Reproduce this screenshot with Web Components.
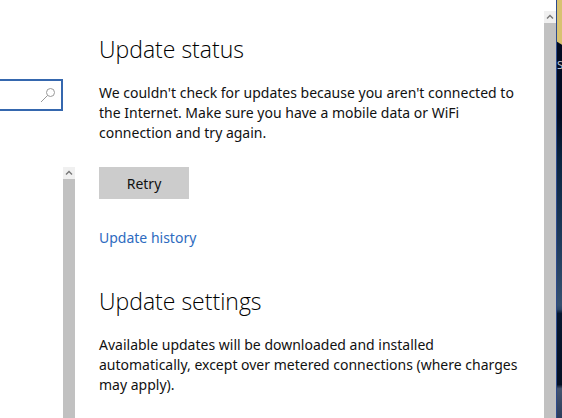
<!DOCTYPE html>
<html lang="en">
<head>
    <meta charset="utf-8">
    <title>Settings</title>
    <style>
        html, body {
            height: 100%;
            margin: 0;
        }

        body {
            overflow: hidden;
            background: #fff;
            color: #111;
            font: 14px/20px "Noto Sans", "Open Sans", sans-serif;
        }
    </style>
</head>
<body>
    <settings-window>
        <search-box slot="nav" label="Find a setting"></search-box>
        <scroll-rail slot="nav"></scroll-rail>

        <settings-section heading="Update status">
            <p>We couldn't check for updates because you aren't connected to the Internet. Make sure you have a mobile data or WiFi connection and try again.</p>
            <push-button slot="actions">Retry</push-button>
            <text-link slot="actions" href="#history">Update history</text-link>
        </settings-section>
        <settings-section heading="Update settings">
            <p>Available updates will be downloaded and installed automatically, except over metered connections (where charges may apply).</p>
        </settings-section>

        <scroll-rail slot="rail"></scroll-rail>
        <desktop-strip slot="desktop">S</desktop-strip>
    </settings-window>

<script>
    class BaseElement extends HTMLElement {
        constructor() {
            super();
            this.attachShadow({ mode: 'open' });
        }

        connectedCallback() {
            this.shadowRoot.innerHTML = this.render();
        }
    }

    class SettingsWindow extends BaseElement {
        render() {
            return `
                <style>
                    :host { display: flex; height: 100vh; }
                    nav {
                        display: flex;
                        flex-direction: column;
                        align-items: flex-end;
                        gap: 56px;
                        width: 75px;
                        padding-top: 79px;
                        box-sizing: border-box;
                    }
                    main {
                        display: flex;
                        flex-direction: column;
                        gap: 37px;
                        flex: 1;
                        min-width: 0;
                        padding: 33px 16px 0 24px;
                    }
                    .rail { display: flex; padding-top: 11px; }
                </style>
                <nav><slot name="nav"></slot></nav>
                <main><slot></slot></main>
                <div class="rail"><slot name="rail"></slot></div>
                <slot name="desktop"></slot>
            `;
        }
    }

    class SearchBox extends BaseElement {
        render() {
            return `
                <style>
                    :host {
                        display: flex;
                        align-items: center;
                        align-self: stretch;
                        height: 32px;
                        margin-right: 12px;
                        border: 2px solid #3567ae;
                        border-left: 0;
                        box-sizing: border-box;
                    }
                    input {
                        flex: 1;
                        min-width: 0;
                        padding: 0 4px;
                        border: 0;
                        outline: 0;
                        background: none;
                        font: inherit;
                    }
                    svg { width: 16px; height: 16px; margin-right: 5px; }
                </style>
                <input type="text" aria-label="${this.getAttribute('label')}">
                <svg viewBox="0 0 16 16" fill="none" stroke="#999" aria-hidden="true">
                    <circle cx="10.5" cy="5.5" r="4"/>
                    <path d="M7.5 8.5L1 15"/>
                </svg>
            `;
        }
    }

    class ScrollRail extends BaseElement {
        render() {
            return `
                <style>
                    :host { display: flex; flex-direction: column; flex: 1; width: 12px; }
                    button {
                        display: flex;
                        align-items: center;
                        justify-content: center;
                        height: 12px;
                        padding: 0;
                        border: 0;
                        background: #f0f0f0;
                    }
                    svg { width: 8px; height: 6px; }
                    .thumb { flex: 1; background: #c1c1c1; }
                </style>
                <button type="button" aria-label="Scroll up">
                    <svg viewBox="0 0 8 6" fill="none" stroke="#777" stroke-width="1.4" aria-hidden="true"><path d="M1 4.5L4 1.5L7 4.5"/></svg>
                </button>
                <div class="thumb"></div>
            `;
        }
    }

    class SettingsSection extends BaseElement {
        render() {
            return `
                <style>
                    :host { display: block; }
                    h2 {
                        margin: 0 0 18px;
                        font-family: "Open Sans", "Noto Sans", sans-serif;
                        font-size: 23px;
                        font-weight: 300;
                        line-height: 32px;
                        color: #000;
                    }
                    ::slotted(p) { margin: 0; }
                    .actions { display: flex; flex-direction: column; align-items: flex-start; gap: 29px; }
                    ::slotted(push-button) { margin-top: 24px; }
                </style>
                <h2>${this.getAttribute('heading')}</h2>
                <slot></slot>
                <div class="actions"><slot name="actions"></slot></div>
            `;
        }
    }

    class PushButton extends BaseElement {
        render() {
            return `
                <style>
                    :host { display: block; }
                    button {
                        display: block;
                        min-width: 90px;
                        height: 32px;
                        padding: 2px 6px 0;
                        border: 0;
                        background: #ccc;
                        color: inherit;
                        font: inherit;
                    }
                </style>
                <button type="button"><slot></slot></button>
            `;
        }
    }

    class TextLink extends BaseElement {
        render() {
            return `
                <style>
                    :host { display: block; }
                    a { color: #2e6bc0; text-decoration: none; }
                </style>
                <a href="${this.getAttribute('href')}"><slot></slot></a>
            `;
        }
    }

    // Edge of the wallpaper that shows beside the window
    class DesktopStrip extends BaseElement {
        render() {
            return `
                <style>
                    :host {
                        display: block;
                        width: 6px;
                        padding-top: 55px;
                        box-sizing: border-box;
                        border-left: 1px solid #2c4a8c;
                        overflow: hidden;
                        color: #c8d0dc;
                        font-family: "Open Sans", "Noto Sans", sans-serif;
                        font-size: 11px;
                        background:
                            linear-gradient(32deg, transparent 0 4px, #d8c270 5px) top / 100% 47px no-repeat,
                            linear-gradient(#020c22 0 28%, #0a2440 38%, #1f3b5c 58%, #35506f 73%, #2a4566 74%, #071830 75%, #041024 92%, #44546f 93%, #2c3d5c 100%);
                    }
                </style>
                <slot></slot>
            `;
        }
    }

    customElements.define('settings-window', SettingsWindow);
    customElements.define('search-box', SearchBox);
    customElements.define('scroll-rail', ScrollRail);
    customElements.define('settings-section', SettingsSection);
    customElements.define('push-button', PushButton);
    customElements.define('text-link', TextLink);
    customElements.define('desktop-strip', DesktopStrip);
</script>
</body>
</html>
